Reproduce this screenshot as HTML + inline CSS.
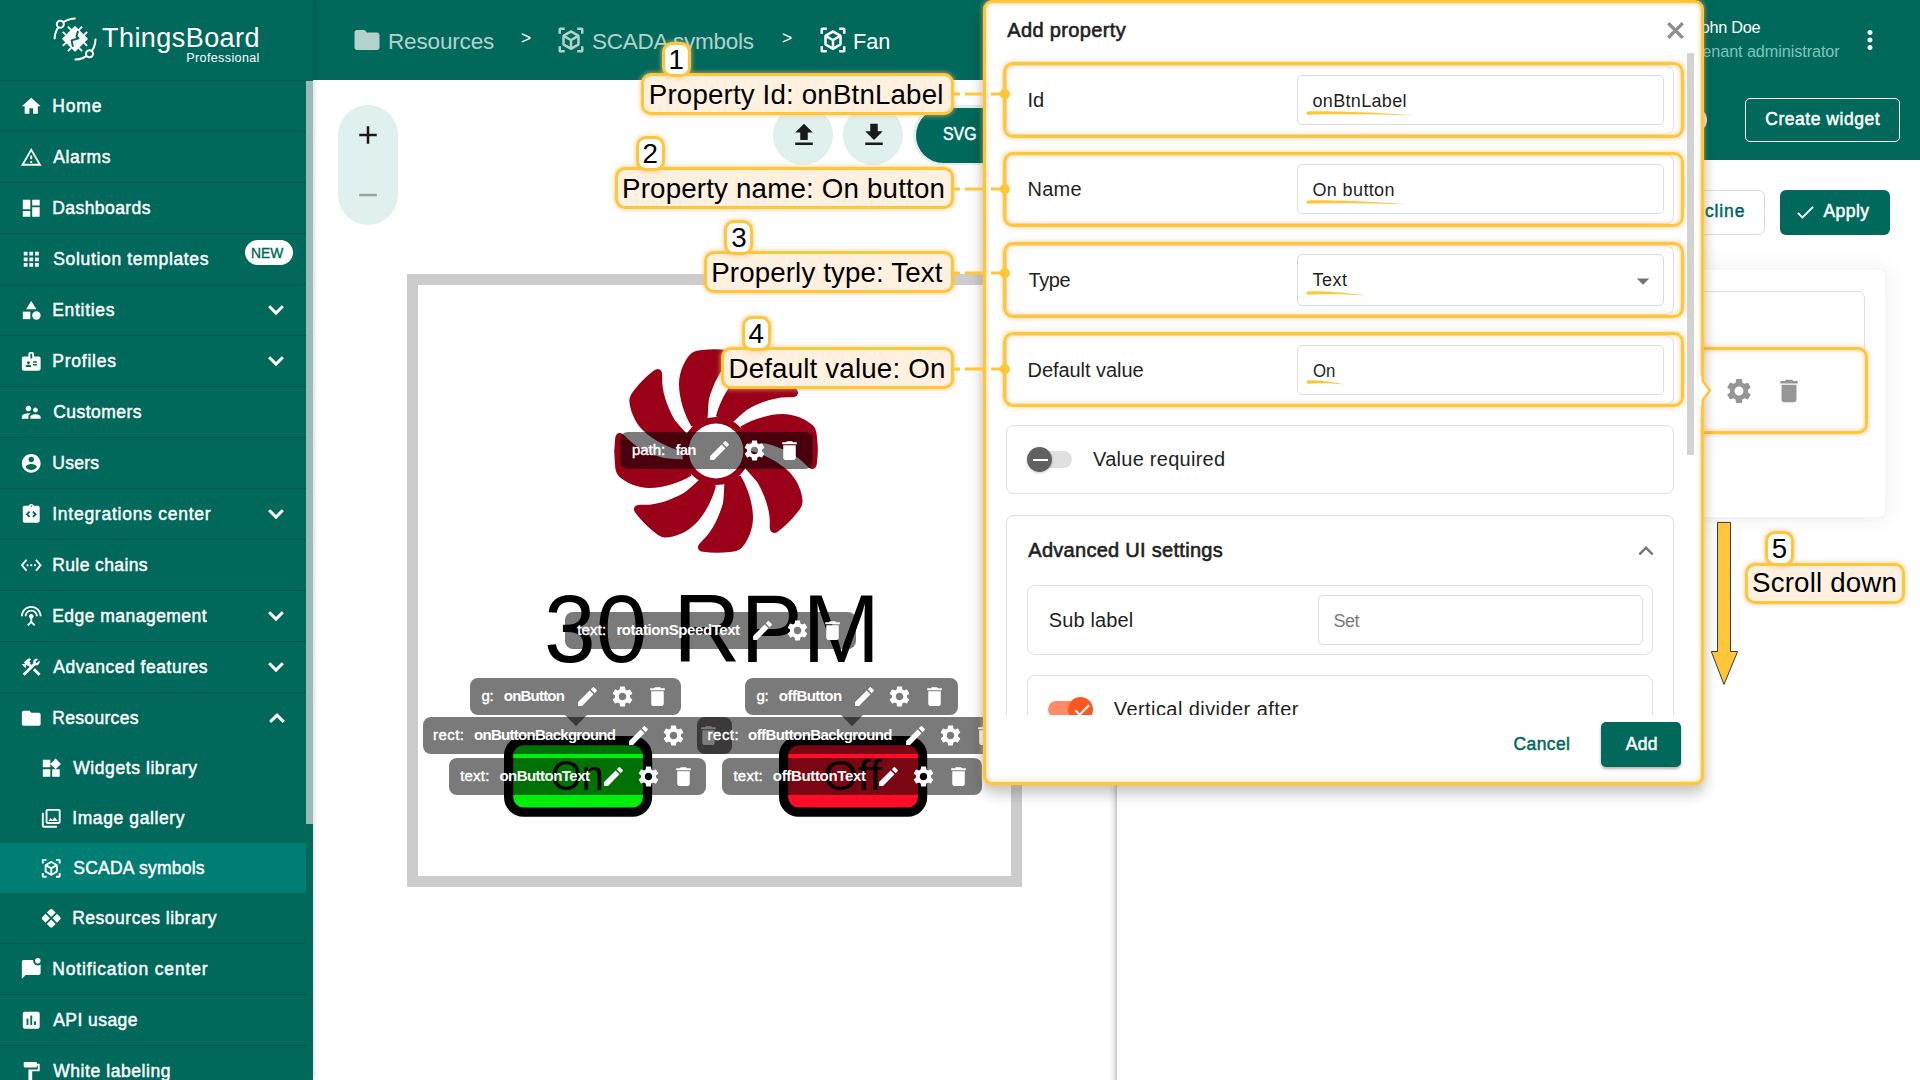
<!DOCTYPE html>
<html lang="en"><head><meta charset="utf-8"><title>ThingsBoard - SCADA symbol editor</title>
<style>
html,body{margin:0;padding:0;}
body{width:1920px;height:1080px;overflow:hidden;background:#fff;font-family:"Liberation Sans",sans-serif;}
#root{position:relative;width:1920px;height:1080px;overflow:hidden;background:#fff;}
.b{position:absolute;box-sizing:border-box;}
.t{position:absolute;white-space:nowrap;display:block;}
.ic{position:absolute;display:block;}
svg{overflow:visible;}

</style></head>
<body>
<div id="root">
<!-- main content -->
<div class="b" style="left:313px;top:80px;width:1607px;height:1000px;background:#fff;"></div>
<div class="b" style="left:1109px;top:80px;width:8px;height:1000px;background:linear-gradient(90deg,rgba(0,0,0,0) 0%,rgba(0,0,0,.05) 45%,rgba(0,0,0,.12) 75%,rgba(0,0,0,.24) 100%);"></div>
<!-- header -->
<div class="b" style="left:313px;top:0px;width:1607px;height:80px;background:#00695c;"></div>
<div class="b" style="left:1117px;top:80px;width:803px;height:80px;background:#00695c;"></div>
<svg class="ic" style="left:352.00px;top:25.00px;" width="30" height="30" viewBox="0 0 24 24" fill="#b3d2ce"><path d="M10 4H4c-1.1 0-1.99.9-1.99 2L2 18c0 1.1.9 2 2 2h16c1.1 0 2-.9 2-2V8c0-1.1-.9-2-2-2h-8l-2-2z"/></svg>
<span id="t0" class="t" style="left:388.00px;top:30.95px;font-size:22.5px;line-height:22.5px;color:#b3d2ce;letter-spacing:-0.162px;">Resources</span>
<span id="t1" class="t" style="left:521.00px;top:29.79px;font-size:17.5px;line-height:17.5px;color:#fff;">&gt;</span>
<svg class="ic" style="left:556.00px;top:25.00px;" width="30" height="30" viewBox="0 0 24 24" fill="#b3d2ce"><path d="M18.25 7.6l-5.5-3.18c-.46-.27-1.04-.27-1.5 0L5.75 7.6c-.46.27-.75.76-.75 1.3v6.350c0 .54.29 1.03.75 1.3l5.5 3.18c.46.27 1.04.27 1.5 0l5.5-3.18c.46-.27.75-.76.75-1.3V8.9c0-.54-.29-1.03-.75-1.3zM7 14.96v-4.62l4 2.32v4.61l-4-2.310zm5-4.03L8 8.61l4-2.31 4 2.31-4 2.320zm1 6.340v-4.61l4-2.32v4.62l-4 2.310zM7 2H3.5C2.67 2 2 2.670 2 3.5V7h2V4h3V2zm10 0h3.5c.83 0 1.5.67 1.5 1.5V7h-2V4h-3V2zM7 22H3.5c-.83 0-1.5-.67-1.5-1.5V17h2v3h3v2zm10 0h3.5c.83 0 1.5-.67 1.5-1.500V17h-2v3h-3v2z"/></svg>
<span id="t2" class="t" style="left:592.00px;top:30.95px;font-size:22.5px;line-height:22.5px;color:#b3d2ce;letter-spacing:-0.253px;">SCADA symbols</span>
<span id="t3" class="t" style="left:782.00px;top:29.79px;font-size:17.5px;line-height:17.5px;color:#fff;">&gt;</span>
<svg class="ic" style="left:818.00px;top:25.00px;" width="30" height="30" viewBox="0 0 24 24" fill="#fff"><path d="M18.25 7.6l-5.5-3.18c-.46-.27-1.04-.27-1.5 0L5.75 7.6c-.46.27-.75.76-.75 1.3v6.350c0 .54.29 1.03.75 1.3l5.5 3.18c.46.27 1.04.27 1.5 0l5.5-3.18c.46-.27.75-.76.75-1.3V8.9c0-.54-.29-1.03-.75-1.3zM7 14.96v-4.62l4 2.32v4.61l-4-2.310zm5-4.03L8 8.61l4-2.31 4 2.31-4 2.320zm1 6.340v-4.61l4-2.32v4.62l-4 2.310zM7 2H3.5C2.67 2 2 2.670 2 3.5V7h2V4h3V2zm10 0h3.5c.83 0 1.5.67 1.5 1.5V7h-2V4h-3V2zM7 22H3.5c-.83 0-1.5-.67-1.5-1.5V17h2v3h3v2zm10 0h3.5c.83 0 1.5-.67 1.5-1.500V17h-2v3h-3v2z"/></svg>
<span id="t4" class="t" style="left:853.03px;top:30.95px;font-size:22.5px;line-height:22.5px;color:#fff;transform-origin:0 0;transform:scaleX(0.9663);">Fan</span>
<span id="t5" class="t" style="left:1693.00px;top:19.24px;font-size:16.25px;line-height:16.25px;color:#fff;letter-spacing:-0.289px;">John Doe</span>
<span id="t6" class="t" style="left:1694.30px;top:43.24px;font-size:16.25px;line-height:16.25px;color:#7fc4bb;letter-spacing:-0.096px;">Tenant administrator</span>
<svg class="ic" style="left:1855.00px;top:25.00px;" width="30" height="30" viewBox="0 0 24 24" fill="#fff"><path d="M12 8c1.1 0 2-.9 2-2s-.9-2-2-2-2 .9-2 2 .9 2 2 2zm0 2c-1.1 0-2 .9-2 2s.9 2 2 2 2-.9 2-2-.9-2-2-2zm0 6c-1.1 0-2 .9-2 2s.9 2 2 2 2-.9 2-2-.9-2-2-2z"/></svg>
<div class="b" style="left:1745px;top:98px;width:155px;height:44px;border:1px solid #fff;border-radius:5px;"></div>
<span id="t7" class="t" style="left:1765.25px;top:111.19px;font-size:17.5px;line-height:17.5px;color:#fff;letter-spacing:0.532px;-webkit-text-stroke:0.5px #fff;">Create widget</span>
<!-- sidebar -->
<div class="b" style="left:0px;top:0px;width:313px;height:1080px;background:#00695c;box-shadow:1px 0 5px rgba(0,0,0,.16);"></div>
<div class="b" style="left:306px;top:81px;width:7px;height:743px;background:#99bab6;"></div>
<svg class="ic" style="left:45px;top:10px" width="70" height="60" viewBox="45 10 70 60">
<g fill="none" stroke="#fff" stroke-width="2" stroke-linecap="round">
<path d="M54.6 38.4 A20.6 20.6 0 0 1 74.8 18.5"/><path d="M95.5 39.4 A20.6 20.6 0 0 1 75.4 59.6"/>
<circle cx="60.3" cy="24.3" r="3.5" fill="#00695c"/><circle cx="89.5" cy="53.7" r="3.5" fill="#00695c"/>
<g transform="translate(75 38.9) rotate(45)" stroke-width="1.8" stroke-linecap="butt"><path d="M-3.6 -9 V-13.6 M-3.6 9 V13.6 M-9 -3.6 H-13.6 M9 -3.6 H13.6"/><path d="M3.6 -9 V-13.6 M3.6 9 V13.6 M-9 3.6 H-13.6 M9 3.6 H13.6"/><rect x="-9.3" y="-9.3" width="18.6" height="18.6" rx="1" fill="#fff" stroke="none"/></g>
<path d="M77.8 31.8 L76.4 36.6 L78.6 38.2 L71.6 40.4 L72.8 46" stroke="#00695c" stroke-width="2" stroke-linejoin="round"/>
</g></svg>
<span id="t8" class="t" style="left:102.00px;top:25.14px;font-size:27px;line-height:27px;color:#fff;letter-spacing:0.443px;">ThingsBoard</span>
<span id="t9" class="t" style="left:186.30px;top:52.42px;font-size:12.5px;line-height:12.5px;color:#fff;letter-spacing:0.390px;">Professional</span>
<div class="b" style="left:0px;top:80px;width:306px;height:1px;background:rgba(0,0,0,.14);"></div>
<svg class="ic" style="left:20.25px;top:94.75px;" width="22.5" height="22.5" viewBox="0 0 24 24" fill="#fff"><path d="M10 20v-6h4v6h5v-8h3L12 3 2 12h3v8z"/></svg>
<span id="t10" class="t" style="left:52.23px;top:98.19px;font-size:17.5px;line-height:17.5px;color:#fff;letter-spacing:0.867px;-webkit-text-stroke:0.45px #fff;">Home</span>
<div class="b" style="left:0px;top:131px;width:306px;height:1px;background:rgba(0,0,0,.14);"></div>
<svg class="ic" style="left:20.25px;top:145.75px;" width="22.5" height="22.5" viewBox="0 0 24 24" fill="#fff"><path d="M12 5.99L19.53 19H4.47L12 5.99M12 2L1 21h22L12 2zm1 14h-2v2h2v-2zm0-6h-2v4h2v-4z"/></svg>
<span id="t11" class="t" style="left:53.23px;top:149.19px;font-size:17.5px;line-height:17.5px;color:#fff;letter-spacing:0.570px;-webkit-text-stroke:0.45px #fff;">Alarms</span>
<div class="b" style="left:0px;top:182px;width:306px;height:1px;background:rgba(0,0,0,.14);"></div>
<svg class="ic" style="left:20.25px;top:196.75px;" width="22.5" height="22.5" viewBox="0 0 24 24" fill="#fff"><path d="M3 13h8V3H3v10zm0 8h8v-6H3v6zm10 0h8V11h-8v10zm0-18v6h8V3h-8z"/></svg>
<span id="t12" class="t" style="left:52.23px;top:200.19px;font-size:17.5px;line-height:17.5px;color:#fff;letter-spacing:0.438px;-webkit-text-stroke:0.45px #fff;">Dashboards</span>
<div class="b" style="left:0px;top:233px;width:306px;height:1px;background:rgba(0,0,0,.14);"></div>
<svg class="ic" style="left:20.25px;top:247.75px;" width="22.5" height="22.5" viewBox="0 0 24 24" fill="#fff"><path d="M4 8h4V4H4v4zm6 12h4v-4h-4v4zm-6 0h4v-4H4v4zm0-6h4v-4H4v4zm6 0h4v-4h-4v4zm6-10v4h4V4h-4zm-6 4h4V4h-4v4zm6 6h4v-4h-4v4zm0 6h4v-4h-4v4z"/></svg>
<span id="t13" class="t" style="left:53.23px;top:251.19px;font-size:17.5px;line-height:17.5px;color:#fff;letter-spacing:0.666px;-webkit-text-stroke:0.45px #fff;">Solution templates</span>
<div class="b" style="left:245px;top:239.5px;width:48.3px;height:25px;background:#fff;border-radius:13px;"></div>
<span id="t14" class="t" style="left:251.46px;top:245.10px;font-size:15px;line-height:15px;color:#00695c;-webkit-text-stroke:0.4px #00695c;transform-origin:0 0;transform:scaleX(0.9223);">NEW</span>
<div class="b" style="left:0px;top:284px;width:306px;height:1px;background:rgba(0,0,0,.14);"></div>
<svg class="ic" style="left:20.25px;top:298.75px;" width="22.5" height="22.5" viewBox="0 0 24 24" fill="#fff"><path d="M12 2l-5.5 9h11z"/><circle cx="17.5" cy="17.5" r="4.5"/><path d="M3 13.5h8v8H3z"/></svg>
<span id="t15" class="t" style="left:52.23px;top:302.19px;font-size:17.5px;line-height:17.5px;color:#fff;letter-spacing:0.702px;-webkit-text-stroke:0.45px #fff;">Entities</span>
<svg class="ic" style="left:266px;top:302px" width="20" height="16" viewBox="-10 -8 20 16"><path d="M-6.8 -3.7 L0 3.1 L6.8 -3.7" fill="none" stroke="#fff" stroke-width="3"/></svg>
<div class="b" style="left:0px;top:335px;width:306px;height:1px;background:rgba(0,0,0,.14);"></div>
<svg class="ic" style="left:20.25px;top:349.75px;" width="22.5" height="22.5" viewBox="0 0 24 24" fill="#fff"><path d="M20 7h-5V4c0-1.1-.9-2-2-2h-2c-1.1 0-2 .9-2 2v3H4c-1.1 0-2 .9-2 2v11c0 1.1.9 2 2 2h16c1.1 0 2-.9 2-2V9c0-1.1-.9-2-2-2zM9 12c.83 0 1.5.67 1.5 1.5S9.83 15 9 15s-1.5-.67-1.5-1.5S8.17 12 9 12zm3 6H6v-.75c0-1 2-1.5 3-1.5s3 .5 3 1.5V18zm1-9h-2V4h2v5zm5 7.5h-4V15h4v1.5zm0-3h-4V12h4v1.5z"/></svg>
<span id="t16" class="t" style="left:52.23px;top:353.19px;font-size:17.5px;line-height:17.5px;color:#fff;letter-spacing:0.778px;-webkit-text-stroke:0.45px #fff;">Profiles</span>
<svg class="ic" style="left:266px;top:353px" width="20" height="16" viewBox="-10 -8 20 16"><path d="M-6.8 -3.7 L0 3.1 L6.8 -3.7" fill="none" stroke="#fff" stroke-width="3"/></svg>
<div class="b" style="left:0px;top:386px;width:306px;height:1px;background:rgba(0,0,0,.14);"></div>
<svg class="ic" style="left:20.25px;top:400.75px;" width="22.5" height="22.5" viewBox="0 0 24 24" fill="#fff"><path d="M16.5 12c1.38 0 2.49-1.12 2.49-2.5S17.88 7 16.5 7C15.12 7 14 8.12 14 9.5s1.12 2.5 2.5 2.5zM9 11c1.66 0 2.99-1.34 2.99-3S10.66 5 9 5C7.34 5 6 6.34 6 8s1.34 3 3 3zm7.5 3c-1.83 0-5.5.92-5.5 2.75V19h11v-2.25c0-1.83-3.67-2.75-5.5-2.75zM9 13c-2.33 0-7 1.17-7 3.5V19h7v-2.25c0-.85.33-2.34 2.37-3.47C10.5 13.1 9.66 13 9 13z"/></svg>
<span id="t17" class="t" style="left:53.23px;top:404.19px;font-size:17.5px;line-height:17.5px;color:#fff;letter-spacing:0.462px;-webkit-text-stroke:0.45px #fff;">Customers</span>
<div class="b" style="left:0px;top:437px;width:306px;height:1px;background:rgba(0,0,0,.14);"></div>
<svg class="ic" style="left:20.25px;top:451.75px;" width="22.5" height="22.5" viewBox="0 0 24 24" fill="#fff"><path d="M12 2C6.48 2 2 6.48 2 12s4.48 10 10 10 10-4.48 10-10S17.52 2 12 2zm0 3c1.66 0 3 1.34 3 3s-1.34 3-3 3-3-1.34-3-3 1.34-3 3-3zm0 14.2c-2.5 0-4.71-1.28-6-3.22.03-1.99 4-3.08 6-3.08 1.99 0 5.97 1.09 6 3.08-1.29 1.94-3.5 3.22-6 3.22z"/></svg>
<span id="t18" class="t" style="left:52.23px;top:455.19px;font-size:17.5px;line-height:17.5px;color:#fff;letter-spacing:0.275px;-webkit-text-stroke:0.45px #fff;">Users</span>
<div class="b" style="left:0px;top:488px;width:306px;height:1px;background:rgba(0,0,0,.14);"></div>
<svg class="ic" style="left:20.25px;top:502.75px;" width="22.5" height="22.5" viewBox="0 0 24 24" fill="#fff"><path d="M19 3h-4.18C14.4 1.84 13.3 1 12 1s-2.4.84-2.82 2H5c-.14 0-.27.01-.4.04-.39.08-.74.28-1.01.55-.18.18-.33.4-.43.64-.1.23-.16.49-.16.77v14c0 .27.06.54.16.78s.25.45.43.64c.27.27.62.47 1.01.55.13.02.26.03.4.03h14c1.1 0 2-.9 2-2V5c0-1.1-.9-2-2-2zm-8 11.17l-1.41 1.42L6 12l3.59-3.59L11 9.83 8.83 12 11 14.17zm1-9.92c-.41 0-.75-.34-.75-.75s.34-.75.75-.75.75.34.75.75-.34.75-.75.75zm2.41 11.34L13 14.17 15.17 12 13 9.83l1.41-1.42L18 12l-3.59 3.59z"/></svg>
<span id="t19" class="t" style="left:52.23px;top:506.19px;font-size:17.5px;line-height:17.5px;color:#fff;letter-spacing:0.746px;-webkit-text-stroke:0.45px #fff;">Integrations center</span>
<svg class="ic" style="left:266px;top:506px" width="20" height="16" viewBox="-10 -8 20 16"><path d="M-6.8 -3.7 L0 3.1 L6.8 -3.7" fill="none" stroke="#fff" stroke-width="3"/></svg>
<div class="b" style="left:0px;top:539px;width:306px;height:1px;background:rgba(0,0,0,.14);"></div>
<svg class="ic" style="left:20.25px;top:553.75px;" width="22.5" height="22.5" viewBox="0 0 24 24" fill="#fff"><path d="M7.77 6.76L6.23 5.48.82 12l5.41 6.52 1.54-1.28L3.42 12l4.35-5.24zM7 13h2v-2H7v2zm10-2h-2v2h2v-2zm-6 2h2v-2h-2v2zm6.77-7.52l-1.54 1.28L20.58 12l-4.35 5.24 1.54 1.28L23.18 12l-5.41-6.52z"/></svg>
<span id="t20" class="t" style="left:52.23px;top:557.19px;font-size:17.5px;line-height:17.5px;color:#fff;letter-spacing:0.386px;-webkit-text-stroke:0.45px #fff;">Rule chains</span>
<div class="b" style="left:0px;top:590px;width:306px;height:1px;background:rgba(0,0,0,.14);"></div>
<svg class="ic" style="left:20.25px;top:604.75px;" width="22.5" height="22.5" viewBox="0 0 24 24" fill="#fff"><path d="M12 5c-3.87 0-7 3.13-7 7h2c0-2.76 2.24-5 5-5s5 2.24 5 5h2c0-3.87-3.13-7-7-7zm1 9.29c.88-.39 1.5-1.26 1.5-2.29 0-1.38-1.12-2.5-2.5-2.5S9.5 10.62 9.5 12c0 1.02.62 1.9 1.5 2.29v3.3L7.59 21 9 22.41l3-3 3 3L16.41 21 13 17.59v-3.3zM12 1C5.93 1 1 5.93 1 12h2c0-4.97 4.03-9 9-9s9 4.03 9 9h2c0-6.07-4.93-11-11-11z"/></svg>
<span id="t21" class="t" style="left:52.23px;top:608.19px;font-size:17.5px;line-height:17.5px;color:#fff;letter-spacing:0.467px;-webkit-text-stroke:0.45px #fff;">Edge management</span>
<svg class="ic" style="left:266px;top:608px" width="20" height="16" viewBox="-10 -8 20 16"><path d="M-6.8 -3.7 L0 3.1 L6.8 -3.7" fill="none" stroke="#fff" stroke-width="3"/></svg>
<div class="b" style="left:0px;top:641px;width:306px;height:1px;background:rgba(0,0,0,.14);"></div>
<svg class="ic" style="left:20.25px;top:655.75px;" width="22.5" height="22.5" viewBox="0 0 24 24" fill="#fff"><path d="M13.783 15.172l2.121-2.121 5.996 5.996-2.121 2.121z"/><path d="M17.5 10c1.93 0 3.5-1.57 3.5-3.5 0-.58-.16-1.12-.41-1.6l-2.7 2.7-1.49-1.49 2.7-2.7c-.48-.25-1.02-.41-1.6-.41C15.57 3 14 4.57 14 6.5c0 .41.08.8.21 1.16l-1.85 1.85-1.78-1.78.71-.71-1.41-1.41L12 3.49c-1.17-1.17-3.07-1.17-4.24 0L4.22 7.03l1.41 1.41H2.81l-.71.71 3.54 3.54.71-.71V9.15l1.41 1.41.71-.71 1.78 1.78-7.41 7.41 2.12 2.12L16.34 9.79c.36.13.75.21 1.16.21z"/></svg>
<span id="t22" class="t" style="left:53.23px;top:659.19px;font-size:17.5px;line-height:17.5px;color:#fff;letter-spacing:0.523px;-webkit-text-stroke:0.45px #fff;">Advanced features</span>
<svg class="ic" style="left:266px;top:659px" width="20" height="16" viewBox="-10 -8 20 16"><path d="M-6.8 -3.7 L0 3.1 L6.8 -3.7" fill="none" stroke="#fff" stroke-width="3"/></svg>
<div class="b" style="left:0px;top:692px;width:306px;height:1px;background:rgba(0,0,0,.14);"></div>
<svg class="ic" style="left:20.25px;top:706.75px;" width="22.5" height="22.5" viewBox="0 0 24 24" fill="#fff"><path d="M10 4H4c-1.1 0-1.99.9-1.99 2L2 18c0 1.1.9 2 2 2h16c1.1 0 2-.9 2-2V8c0-1.1-.9-2-2-2h-8l-2-2z"/></svg>
<span id="t23" class="t" style="left:52.23px;top:710.19px;font-size:17.5px;line-height:17.5px;color:#fff;letter-spacing:0.332px;-webkit-text-stroke:0.45px #fff;">Resources</span>
<svg class="ic" style="left:267px;top:710px" width="20" height="16" viewBox="-10 -8 20 16"><path d="M-6.8 3.9 L0 -2.9 L6.8 3.9" fill="none" stroke="#fff" stroke-width="3"/></svg>
<svg class="ic" style="left:40.25px;top:756.75px;" width="22.5" height="22.5" viewBox="0 0 24 24" fill="#fff"><path d="M13 13v8h8v-8h-8zM3 21h8v-8H3v8zM3 3v8h8V3H3zm13.66-1.31L11 7.34 16.66 13l5.66-5.66-5.66-5.65z"/></svg>
<span id="t24" class="t" style="left:73.22px;top:760.19px;font-size:17.5px;line-height:17.5px;color:#fff;letter-spacing:0.577px;-webkit-text-stroke:0.45px #fff;">Widgets library</span>
<svg class="ic" style="left:40.25px;top:806.75px;" width="22.5" height="22.5" viewBox="0 0 24 24" fill="#fff"><path d="M20 4v12H8V4h12m0-2H8c-1.1 0-2 .9-2 2v12c0 1.1.9 2 2 2h12c1.1 0 2-.9 2-2V4c0-1.1-.9-2-2-2zm-8.5 9.67l1.69 2.26 2.48-3.1L19 15H9zM2 6v14c0 1.1.9 2 2 2h14v-2H4V6H2z"/></svg>
<span id="t25" class="t" style="left:72.22px;top:810.19px;font-size:17.5px;line-height:17.5px;color:#fff;letter-spacing:0.604px;-webkit-text-stroke:0.45px #fff;">Image gallery</span>
<div class="b" style="left:0px;top:843px;width:306px;height:50px;background:#007e73;"></div>
<svg class="ic" style="left:40.25px;top:856.75px;" width="22.5" height="22.5" viewBox="0 0 24 24" fill="#fff"><path d="M18.25 7.6l-5.5-3.18c-.46-.27-1.04-.27-1.5 0L5.75 7.6c-.46.27-.75.76-.75 1.3v6.350c0 .54.29 1.03.75 1.3l5.5 3.18c.46.27 1.04.27 1.5 0l5.5-3.18c.46-.27.75-.76.75-1.3V8.9c0-.54-.29-1.03-.75-1.3zM7 14.96v-4.62l4 2.32v4.61l-4-2.310zm5-4.03L8 8.61l4-2.31 4 2.31-4 2.320zm1 6.340v-4.61l4-2.32v4.62l-4 2.310zM7 2H3.5C2.67 2 2 2.670 2 3.5V7h2V4h3V2zm10 0h3.5c.83 0 1.5.67 1.5 1.5V7h-2V4h-3V2zM7 22H3.5c-.83 0-1.5-.67-1.5-1.5V17h2v3h3v2zm10 0h3.5c.83 0 1.5-.67 1.5-1.500V17h-2v3h-3v2z"/></svg>
<span id="t26" class="t" style="left:73.22px;top:860.19px;font-size:17.5px;line-height:17.5px;color:#fff;letter-spacing:0.247px;-webkit-text-stroke:0.45px #fff;">SCADA symbols</span>
<svg class="ic" style="left:40.25px;top:906.75px;" width="22.5" height="22.5" viewBox="0 0 24 24" fill="#fff"><path d="M12 2C11.5 2 11 2.19 10.59 2.59L7.29 5.88L12 10.58L16.71 5.88L13.41 2.59C13 2.19 12.5 2 12 2M5.88 7.29L2.59 10.59C1.8 11.37 1.8 12.63 2.59 13.41L5.88 16.71L10.58 12L5.88 7.29M18.12 7.29L13.42 12L18.12 16.71L21.41 13.41C22.2 12.63 22.2 11.37 21.41 10.59L18.12 7.29M12 13.42L7.29 18.12L10.59 21.41C11.37 22.2 12.63 22.2 13.41 21.41L16.71 18.12L12 13.42Z"/></svg>
<span id="t27" class="t" style="left:72.22px;top:910.19px;font-size:17.5px;line-height:17.5px;color:#fff;letter-spacing:0.509px;-webkit-text-stroke:0.45px #fff;">Resources library</span>
<div class="b" style="left:0px;top:943px;width:306px;height:1px;background:rgba(0,0,0,.14);"></div>
<svg class="ic" style="left:20.25px;top:957.75px;" width="22.5" height="22.5" viewBox="0 0 24 24" fill="#fff"><path d="M22 6.98V16c0 1.1-.9 2-2 2H6l-4 4V4c0-1.1.9-2 2-2h10.1c-.06.32-.1.66-.1 1 0 2.76 2.24 5 5 5 1.13 0 2.16-.39 3-1.020zM16 3c0 1.66 1.34 3 3 3s3-1.34 3-3-1.340-3-3-3-3 1.34-3 3z"/></svg>
<span id="t28" class="t" style="left:52.23px;top:961.19px;font-size:17.5px;line-height:17.5px;color:#fff;letter-spacing:0.851px;-webkit-text-stroke:0.45px #fff;">Notification center</span>
<div class="b" style="left:0px;top:994px;width:306px;height:1px;background:rgba(0,0,0,.14);"></div>
<svg class="ic" style="left:20.25px;top:1008.75px;" width="22.5" height="22.5" viewBox="0 0 24 24" fill="#fff"><path d="M19 3H5c-1.1 0-2 .9-2 2v14c0 1.1.9 2 2 2h14c1.1 0 2-.9 2-2V5c0-1.1-.9-2-2-2zM9 17H7v-7h2v7zm4 0h-2V7h2v10zm4 0h-2v-4h2v4z"/></svg>
<span id="t29" class="t" style="left:53.23px;top:1012.19px;font-size:17.5px;line-height:17.5px;color:#fff;letter-spacing:0.442px;-webkit-text-stroke:0.45px #fff;">API usage</span>
<div class="b" style="left:0px;top:1045px;width:306px;height:1px;background:rgba(0,0,0,.14);"></div>
<svg class="ic" style="left:20.25px;top:1059.75px;" width="22.5" height="22.5" viewBox="0 0 24 24" fill="#fff"><path d="M18 4V3c0-.55-.45-1-1-1H5c-.55 0-1 .45-1 1v4c0 .55.45 1 1 1h12c.55 0 1-.45 1-1V6h1v4H9v11c0 .55.45 1 1 1h2c.55 0 1-.45 1-1v-9h8V4h-3z"/></svg>
<span id="t30" class="t" style="left:53.23px;top:1063.19px;font-size:17.5px;line-height:17.5px;color:#fff;letter-spacing:0.566px;-webkit-text-stroke:0.45px #fff;">White labeling</span>
<div class="b" style="left:0px;top:1096px;width:306px;height:1px;background:rgba(0,0,0,.14);"></div>
<!-- editor -->
<div class="b" style="left:338px;top:105px;width:60px;height:120px;background:#e0f0ee;border-radius:30px;"></div>
<svg class="ic" style="left:353.00px;top:120.00px;" width="30" height="30" viewBox="0 0 24 24" fill="#1a1a1a"><path d="M19 13h-6v6h-2v-6H5v-2h6V5h2v6h6v2z"/></svg>
<svg class="ic" style="left:353.00px;top:180.00px;" width="30" height="30" viewBox="0 0 24 24" fill="#9e9e9e"><path d="M19 13H5v-2h14v2z"/></svg>
<div class="b" style="left:773px;top:105px;width:60px;height:60px;background:#e0f0ee;border-radius:30px;"></div>
<div class="b" style="left:843px;top:105px;width:60px;height:60px;background:#e0f0ee;border-radius:30px;"></div>
<svg class="ic" style="left:788.50px;top:120.00px;" width="30" height="30" viewBox="0 0 24 24" fill="#1a1a1a"><path d="M9 16h6v-6h4l-7-7-7 7h4zm-4 2h14v2H5z"/></svg>
<svg class="ic" style="left:858.50px;top:120.00px;" width="30" height="30" viewBox="0 0 24 24" fill="#1a1a1a"><path d="M19 9h-4V3H9v6H5l7 7 7-7zM5 18v2h14v-2H5z"/></svg>
<div class="b" style="left:913px;top:105px;width:140px;height:60px;background:#e0f0ee;border-radius:30px;"></div>
<div class="b" style="left:916px;top:108px;width:120px;height:55px;background:#00695c;border-radius:27.5px;"></div>
<span id="t31" class="t" style="left:942.60px;top:126.19px;font-size:17.5px;line-height:17.5px;color:#fff;-webkit-text-stroke:0.45px #fff;transform-origin:0 0;transform:scaleX(0.9050);">SVG</span>
<div class="b" style="left:407px;top:273.7px;width:614.7px;height:613.8px;border:11.7px solid #ccc;background:#fff;"></div>
<!-- svg canvas content -->
<svg class="ic" style="left:596px;top:331px" width="240" height="240" viewBox="-120 -120 240 240"><g fill="#9b0019"><path transform="rotate(0)" d="M24.5,-24.5 C35,-31 52,-37 66.7,-37 C78,-37 90,-32 97,-25.5 Q100.5,-22 101,-14 A101.5 101.5 0 0 1 100.8,13 Q100,18.5 95.5,18 Q93,17.5 90,14 C82,5 68,-2.5 52,-7 C45,-8 38,-8 30,-8.5 Z"/><path transform="rotate(45)" d="M24.5,-24.5 C35,-31 52,-37 66.7,-37 C78,-37 90,-32 97,-25.5 Q100.5,-22 101,-14 A101.5 101.5 0 0 1 100.8,13 Q100,18.5 95.5,18 Q93,17.5 90,14 C82,5 68,-2.5 52,-7 C45,-8 38,-8 30,-8.5 Z"/><path transform="rotate(90)" d="M24.5,-24.5 C35,-31 52,-37 66.7,-37 C78,-37 90,-32 97,-25.5 Q100.5,-22 101,-14 A101.5 101.5 0 0 1 100.8,13 Q100,18.5 95.5,18 Q93,17.5 90,14 C82,5 68,-2.5 52,-7 C45,-8 38,-8 30,-8.5 Z"/><path transform="rotate(135)" d="M24.5,-24.5 C35,-31 52,-37 66.7,-37 C78,-37 90,-32 97,-25.5 Q100.5,-22 101,-14 A101.5 101.5 0 0 1 100.8,13 Q100,18.5 95.5,18 Q93,17.5 90,14 C82,5 68,-2.5 52,-7 C45,-8 38,-8 30,-8.5 Z"/><path transform="rotate(180)" d="M24.5,-24.5 C35,-31 52,-37 66.7,-37 C78,-37 90,-32 97,-25.5 Q100.5,-22 101,-14 A101.5 101.5 0 0 1 100.8,13 Q100,18.5 95.5,18 Q93,17.5 90,14 C82,5 68,-2.5 52,-7 C45,-8 38,-8 30,-8.5 Z"/><path transform="rotate(225)" d="M24.5,-24.5 C35,-31 52,-37 66.7,-37 C78,-37 90,-32 97,-25.5 Q100.5,-22 101,-14 A101.5 101.5 0 0 1 100.8,13 Q100,18.5 95.5,18 Q93,17.5 90,14 C82,5 68,-2.5 52,-7 C45,-8 38,-8 30,-8.5 Z"/><path transform="rotate(270)" d="M24.5,-24.5 C35,-31 52,-37 66.7,-37 C78,-37 90,-32 97,-25.5 Q100.5,-22 101,-14 A101.5 101.5 0 0 1 100.8,13 Q100,18.5 95.5,18 Q93,17.5 90,14 C82,5 68,-2.5 52,-7 C45,-8 38,-8 30,-8.5 Z"/><path transform="rotate(315)" d="M24.5,-24.5 C35,-31 52,-37 66.7,-37 C78,-37 90,-32 97,-25.5 Q100.5,-22 101,-14 A101.5 101.5 0 0 1 100.8,13 Q100,18.5 95.5,18 Q93,17.5 90,14 C82,5 68,-2.5 52,-7 C45,-8 38,-8 30,-8.5 Z"/><circle r="34"/></g><circle r="27.4" fill="#fff"/></svg>
<span id="t32" class="t" style="left:544.11px;top:580.71px;font-size:96.5px;line-height:96.5px;color:#000;transform-origin:0 0;transform:scaleX(0.9639);">30 RPM</span>
<svg class="ic" style="left:503.75px;top:736.4px" width="148.15" height="80.70"><rect x="4.6" y="4.6" width="138.95" height="71.50" rx="15" fill="#00ee0c" stroke="#000" stroke-width="9.2"/></svg>
<span id="t33" class="t" style="left:551.44px;top:755.02px;font-size:42.5px;line-height:42.5px;color:#000;transform-origin:0 0;transform:scaleX(0.9297);">On</span>
<svg class="ic" style="left:779px;top:736.4px" width="148.20" height="80.70"><rect x="4.6" y="4.6" width="139.00" height="71.50" rx="15" fill="#ff0d28" stroke="#000" stroke-width="9.2"/></svg>
<span id="t34" class="t" style="left:822.60px;top:755.02px;font-size:42.5px;line-height:42.5px;color:#000;transform-origin:0 0;transform:scaleX(1.0481);">Off</span>
<div class="b" style="left:619.7px;top:431.8px;width:193.0px;height:37.2px;background:rgba(0,0,0,.52);border-radius:8px;"></div>
<span id="t35" class="t" style="left:632.00px;top:441.90px;font-size:15px;line-height:15px;color:#fff;letter-spacing:-0.049px;-webkit-text-stroke:0.4px #fff;">path:</span>
<span id="t36" class="t" style="left:675.50px;top:441.90px;font-size:15px;line-height:15px;color:#fff;font-weight:700;letter-spacing:-0.819px;">fan</span>
<svg class="ic" style="left:707.00px;top:438.00px;" width="25" height="25" viewBox="0 0 24 24" fill="#fff"><path d="M3 17.25V21h3.75L17.81 9.94l-3.75-3.75L3 17.25zM20.71 7.04c.39-.39.39-1.02 0-1.41l-2.34-2.34c-.39-.39-1.02-.39-1.41 0l-1.83 1.83 3.75 3.75 1.83-1.83z"/></svg>
<svg class="ic" style="left:742.00px;top:438.00px;" width="25" height="25" viewBox="0 0 24 24" fill="#fff"><path d="M19.14 12.94c.04-.3.06-.61.06-.94 0-.32-.02-.64-.07-.94l2.03-1.58c.18-.14.23-.41.12-.61l-1.92-3.32c-.12-.22-.37-.29-.59-.22l-2.39.96c-.5-.38-1.03-.7-1.62-.94l-.36-2.54c-.04-.24-.24-.41-.48-.41h-3.84c-.24 0-.43.17-.47.41l-.36 2.54c-.59.24-1.13.57-1.62.94l-2.39-.96c-.22-.08-.47 0-.59.22L2.74 8.87c-.12.21-.08.47.12.61l2.03 1.58c-.05.3-.09.63-.09.94s.02.64.07.94l-2.03 1.58c-.18.14-.23.41-.12.61l1.92 3.32c.12.22.37.29.59.22l2.39-.96c.5.38 1.03.7 1.62.94l.36 2.54c.05.24.24.41.48.41h3.84c.24 0 .44-.17.47-.41l.36-2.54c.59-.24 1.13-.56 1.62-.94l2.39.96c.22.08.47 0 .59-.22l1.92-3.32c.12-.22.07-.47-.12-.61l-2.01-1.58zM12 15.6c-1.98 0-3.6-1.62-3.6-3.6s1.62-3.6 3.6-3.6 3.6 1.62 3.6 3.6-1.62 3.6-3.6 3.6z"/></svg>
<svg class="ic" style="left:777.00px;top:438.00px;" width="25" height="25" viewBox="0 0 24 24" fill="#fff"><path d="M6 19c0 1.1.9 2 2 2h8c1.1 0 2-.9 2-2V7H6v12zM19 4h-3.5l-1-1h-5l-1 1H5v2h14V4z"/></svg>
<div class="b" style="left:564.8px;top:612px;width:291.1px;height:37.2px;background:rgba(0,0,0,.52);border-radius:8px;"></div>
<span id="t37" class="t" style="left:577.20px;top:622.10px;font-size:15px;line-height:15px;color:#fff;letter-spacing:0.156px;-webkit-text-stroke:0.4px #fff;">text:</span>
<span id="t38" class="t" style="left:616.40px;top:622.10px;font-size:15px;line-height:15px;color:#fff;font-weight:700;letter-spacing:-0.430px;">rotationSpeedText</span>
<svg class="ic" style="left:750.20px;top:618.20px;" width="25" height="25" viewBox="0 0 24 24" fill="#fff"><path d="M3 17.25V21h3.75L17.81 9.94l-3.75-3.75L3 17.25zM20.71 7.04c.39-.39.39-1.02 0-1.41l-2.34-2.34c-.39-.39-1.02-.39-1.41 0l-1.83 1.83 3.75 3.75 1.83-1.83z"/></svg>
<svg class="ic" style="left:785.20px;top:618.20px;" width="25" height="25" viewBox="0 0 24 24" fill="#fff"><path d="M19.14 12.94c.04-.3.06-.61.06-.94 0-.32-.02-.64-.07-.94l2.03-1.58c.18-.14.23-.41.12-.61l-1.92-3.32c-.12-.22-.37-.29-.59-.22l-2.39.96c-.5-.38-1.03-.7-1.62-.94l-.36-2.54c-.04-.24-.24-.41-.48-.41h-3.84c-.24 0-.43.17-.47.41l-.36 2.54c-.59.24-1.13.57-1.62.94l-2.39-.96c-.22-.08-.47 0-.59.22L2.74 8.87c-.12.21-.08.47.12.61l2.03 1.58c-.05.3-.09.63-.09.94s.02.64.07.94l-2.03 1.58c-.18.14-.23.41-.12.61l1.92 3.32c.12.22.37.29.59.22l2.39-.96c.5.38 1.03.7 1.62.94l.36 2.54c.05.24.24.41.48.41h3.84c.24 0 .44-.17.47-.41l.36-2.54c.59-.24 1.13-.56 1.62-.94l2.39.96c.22.08.47 0 .59-.22l1.92-3.32c.12-.22.07-.47-.12-.61l-2.01-1.58zM12 15.6c-1.98 0-3.6-1.62-3.6-3.6s1.62-3.6 3.6-3.6 3.6 1.62 3.6 3.6-1.62 3.6-3.6 3.6z"/></svg>
<svg class="ic" style="left:820.20px;top:618.20px;" width="25" height="25" viewBox="0 0 24 24" fill="#fff"><path d="M6 19c0 1.1.9 2 2 2h8c1.1 0 2-.9 2-2V7H6v12zM19 4h-3.5l-1-1h-5l-1 1H5v2h14V4z"/></svg>
<div class="b" style="left:422.8px;top:716.8px;width:309.0px;height:37.2px;background:rgba(0,0,0,.52);border-radius:8px;"></div>
<span id="t39" class="t" style="left:432.95px;top:726.90px;font-size:15px;line-height:15px;color:#fff;letter-spacing:0.474px;-webkit-text-stroke:0.4px #fff;">rect:</span>
<span id="t40" class="t" style="left:474.00px;top:726.90px;font-size:15px;line-height:15px;color:#fff;font-weight:700;letter-spacing:-0.717px;">onButtonBackground</span>
<svg class="ic" style="left:626.10px;top:723.00px;" width="25" height="25" viewBox="0 0 24 24" fill="#fff"><path d="M3 17.25V21h3.75L17.81 9.94l-3.75-3.75L3 17.25zM20.71 7.04c.39-.39.39-1.02 0-1.41l-2.34-2.34c-.39-.39-1.02-.39-1.41 0l-1.83 1.83 3.75 3.75 1.83-1.83z"/></svg>
<svg class="ic" style="left:661.10px;top:723.00px;" width="25" height="25" viewBox="0 0 24 24" fill="#fff"><path d="M19.14 12.94c.04-.3.06-.61.06-.94 0-.32-.02-.64-.07-.94l2.03-1.58c.18-.14.23-.41.12-.61l-1.92-3.32c-.12-.22-.37-.29-.59-.22l-2.39.96c-.5-.38-1.03-.7-1.62-.94l-.36-2.54c-.04-.24-.24-.41-.48-.41h-3.84c-.24 0-.43.17-.47.41l-.36 2.54c-.59.24-1.13.57-1.62.94l-2.39-.96c-.22-.08-.47 0-.59.22L2.74 8.87c-.12.21-.08.47.12.61l2.03 1.58c-.05.3-.09.63-.09.94s.02.64.07.94l-2.03 1.58c-.18.14-.23.41-.12.61l1.92 3.32c.12.22.37.29.59.22l2.39-.96c.5.38 1.03.7 1.62.94l.36 2.54c.05.24.24.41.48.41h3.84c.24 0 .44-.17.47-.41l.36-2.54c.59-.24 1.13-.56 1.62-.94l2.39.96c.22.08.47 0 .59-.22l1.92-3.32c.12-.22.07-.47-.12-.61l-2.01-1.58zM12 15.6c-1.98 0-3.6-1.62-3.6-3.6s1.62-3.6 3.6-3.6 3.6 1.62 3.6 3.6-1.62 3.6-3.6 3.6z"/></svg>
<svg class="ic" style="left:696.10px;top:723.00px;" width="25" height="25" viewBox="0 0 24 24" fill="#fff"><path d="M6 19c0 1.1.9 2 2 2h8c1.1 0 2-.9 2-2V7H6v12zM19 4h-3.5l-1-1h-5l-1 1H5v2h14V4z"/></svg>
<div class="b" style="left:697px;top:716.8px;width:311.5px;height:37.2px;background:rgba(0,0,0,.52);border-radius:8px;"></div>
<span id="t41" class="t" style="left:707.60px;top:726.90px;font-size:15px;line-height:15px;color:#fff;letter-spacing:0.474px;-webkit-text-stroke:0.4px #fff;">rect:</span>
<span id="t42" class="t" style="left:748.10px;top:726.90px;font-size:15px;line-height:15px;color:#fff;font-weight:700;letter-spacing:-0.589px;">offButtonBackground</span>
<svg class="ic" style="left:902.80px;top:723.00px;" width="25" height="25" viewBox="0 0 24 24" fill="#fff"><path d="M3 17.25V21h3.75L17.81 9.94l-3.75-3.75L3 17.25zM20.71 7.04c.39-.39.39-1.02 0-1.41l-2.34-2.34c-.39-.39-1.02-.39-1.41 0l-1.83 1.83 3.75 3.75 1.83-1.83z"/></svg>
<svg class="ic" style="left:937.80px;top:723.00px;" width="25" height="25" viewBox="0 0 24 24" fill="#fff"><path d="M19.14 12.94c.04-.3.06-.61.06-.94 0-.32-.02-.64-.07-.94l2.03-1.58c.18-.14.23-.41.12-.61l-1.92-3.32c-.12-.22-.37-.29-.59-.22l-2.39.96c-.5-.38-1.03-.7-1.62-.94l-.36-2.54c-.04-.24-.24-.41-.48-.41h-3.84c-.24 0-.43.17-.47.41l-.36 2.54c-.59.24-1.13.57-1.62.94l-2.39-.96c-.22-.08-.47 0-.59.22L2.74 8.87c-.12.21-.08.47.12.61l2.03 1.58c-.05.3-.09.63-.09.94s.02.64.07.94l-2.03 1.58c-.18.14-.23.41-.12.61l1.92 3.32c.12.22.37.29.59.22l2.39-.96c.5.38 1.03.7 1.62.94l.36 2.54c.05.24.24.41.48.41h3.84c.24 0 .44-.17.47-.41l.36-2.54c.59-.24 1.13-.56 1.62-.94l2.39.96c.22.08.47 0 .59-.22l1.92-3.32c.12-.22.07-.47-.12-.61l-2.01-1.58zM12 15.6c-1.98 0-3.6-1.62-3.6-3.6s1.62-3.6 3.6-3.6 3.6 1.62 3.6 3.6-1.62 3.6-3.6 3.6z"/></svg>
<svg class="ic" style="left:972.80px;top:723.00px;" width="25" height="25" viewBox="0 0 24 24" fill="#fff"><path d="M6 19c0 1.1.9 2 2 2h8c1.1 0 2-.9 2-2V7H6v12zM19 4h-3.5l-1-1h-5l-1 1H5v2h14V4z"/></svg>
<div class="b" style="left:470px;top:677.8px;width:210.5px;height:37.2px;background:rgba(0,0,0,.52);border-radius:8px;"></div>
<svg class="ic" style="left:565px;top:715.0px" width="22" height="11.5"><path d="M0 0 L22 0 L11 11.3 Z" fill="rgba(0,0,0,.52)"/></svg>
<span id="t43" class="t" style="left:481.60px;top:687.90px;font-size:15px;line-height:15px;color:#fff;letter-spacing:-0.442px;-webkit-text-stroke:0.4px #fff;">g:</span>
<span id="t44" class="t" style="left:503.75px;top:687.90px;font-size:15px;line-height:15px;color:#fff;font-weight:700;letter-spacing:-0.782px;">onButton</span>
<svg class="ic" style="left:574.80px;top:684.00px;" width="25" height="25" viewBox="0 0 24 24" fill="#fff"><path d="M3 17.25V21h3.75L17.81 9.94l-3.75-3.75L3 17.25zM20.71 7.04c.39-.39.39-1.02 0-1.41l-2.34-2.34c-.39-.39-1.02-.39-1.41 0l-1.83 1.83 3.75 3.75 1.83-1.83z"/></svg>
<svg class="ic" style="left:609.80px;top:684.00px;" width="25" height="25" viewBox="0 0 24 24" fill="#fff"><path d="M19.14 12.94c.04-.3.06-.61.06-.94 0-.32-.02-.64-.07-.94l2.03-1.58c.18-.14.23-.41.12-.61l-1.92-3.32c-.12-.22-.37-.29-.59-.22l-2.39.96c-.5-.38-1.03-.7-1.62-.94l-.36-2.54c-.04-.24-.24-.41-.48-.41h-3.84c-.24 0-.43.17-.47.41l-.36 2.54c-.59.24-1.13.57-1.62.94l-2.39-.96c-.22-.08-.47 0-.59.22L2.74 8.87c-.12.21-.08.47.12.61l2.03 1.58c-.05.3-.09.63-.09.94s.02.64.07.94l-2.03 1.58c-.18.14-.23.41-.12.61l1.92 3.32c.12.22.37.29.59.22l2.39-.96c.5.38 1.03.7 1.62.94l.36 2.54c.05.24.24.41.48.41h3.84c.24 0 .44-.17.47-.41l.36-2.54c.59-.24 1.13-.56 1.62-.94l2.39.96c.22.08.47 0 .59-.22l1.92-3.32c.12-.22.07-.47-.12-.61l-2.01-1.58zM12 15.6c-1.98 0-3.6-1.62-3.6-3.6s1.62-3.6 3.6-3.6 3.6 1.62 3.6 3.6-1.62 3.6-3.6 3.6z"/></svg>
<svg class="ic" style="left:644.80px;top:684.00px;" width="25" height="25" viewBox="0 0 24 24" fill="#fff"><path d="M6 19c0 1.1.9 2 2 2h8c1.1 0 2-.9 2-2V7H6v12zM19 4h-3.5l-1-1h-5l-1 1H5v2h14V4z"/></svg>
<div class="b" style="left:745px;top:677.8px;width:213.0px;height:37.2px;background:rgba(0,0,0,.52);border-radius:8px;"></div>
<svg class="ic" style="left:840.7px;top:715.0px" width="22" height="11.5"><path d="M0 0 L22 0 L11 11.3 Z" fill="rgba(0,0,0,.52)"/></svg>
<span id="t45" class="t" style="left:756.60px;top:687.90px;font-size:15px;line-height:15px;color:#fff;letter-spacing:-0.442px;-webkit-text-stroke:0.4px #fff;">g:</span>
<span id="t46" class="t" style="left:778.75px;top:687.90px;font-size:15px;line-height:15px;color:#fff;font-weight:700;letter-spacing:-0.506px;">offButton</span>
<svg class="ic" style="left:852.30px;top:684.00px;" width="25" height="25" viewBox="0 0 24 24" fill="#fff"><path d="M3 17.25V21h3.75L17.81 9.94l-3.75-3.75L3 17.25zM20.71 7.04c.39-.39.39-1.02 0-1.41l-2.34-2.34c-.39-.39-1.02-.39-1.41 0l-1.83 1.83 3.75 3.75 1.83-1.83z"/></svg>
<svg class="ic" style="left:887.30px;top:684.00px;" width="25" height="25" viewBox="0 0 24 24" fill="#fff"><path d="M19.14 12.94c.04-.3.06-.61.06-.94 0-.32-.02-.64-.07-.94l2.03-1.58c.18-.14.23-.41.12-.61l-1.92-3.32c-.12-.22-.37-.29-.59-.22l-2.39.96c-.5-.38-1.03-.7-1.62-.94l-.36-2.54c-.04-.24-.24-.41-.48-.41h-3.84c-.24 0-.43.17-.47.41l-.36 2.54c-.59.24-1.13.57-1.62.94l-2.39-.96c-.22-.08-.47 0-.59.22L2.74 8.87c-.12.21-.08.47.12.61l2.03 1.58c-.05.3-.09.63-.09.94s.02.64.07.94l-2.03 1.58c-.18.14-.23.41-.12.61l1.92 3.32c.12.22.37.29.59.22l2.39-.96c.5.38 1.03.7 1.62.94l.36 2.54c.05.24.24.41.48.41h3.84c.24 0 .44-.17.47-.41l.36-2.54c.59-.24 1.13-.56 1.62-.94l2.39.96c.22.08.47 0 .59-.22l1.92-3.32c.12-.22.07-.47-.12-.61l-2.01-1.58zM12 15.6c-1.98 0-3.6-1.62-3.6-3.6s1.62-3.6 3.6-3.6 3.6 1.62 3.6 3.6-1.62 3.6-3.6 3.6z"/></svg>
<svg class="ic" style="left:922.30px;top:684.00px;" width="25" height="25" viewBox="0 0 24 24" fill="#fff"><path d="M6 19c0 1.1.9 2 2 2h8c1.1 0 2-.9 2-2V7H6v12zM19 4h-3.5l-1-1h-5l-1 1H5v2h14V4z"/></svg>
<div class="b" style="left:449px;top:757.8px;width:257.3px;height:37.2px;background:rgba(0,0,0,.52);border-radius:8px;"></div>
<span id="t47" class="t" style="left:460.20px;top:767.90px;font-size:15px;line-height:15px;color:#fff;letter-spacing:0.206px;-webkit-text-stroke:0.4px #fff;">text:</span>
<span id="t48" class="t" style="left:499.40px;top:767.90px;font-size:15px;line-height:15px;color:#fff;font-weight:700;letter-spacing:-0.525px;">onButtonText</span>
<svg class="ic" style="left:600.60px;top:764.00px;" width="25" height="25" viewBox="0 0 24 24" fill="#fff"><path d="M3 17.25V21h3.75L17.81 9.94l-3.75-3.75L3 17.25zM20.71 7.04c.39-.39.39-1.02 0-1.41l-2.34-2.34c-.39-.39-1.02-.39-1.41 0l-1.83 1.83 3.75 3.75 1.83-1.83z"/></svg>
<svg class="ic" style="left:635.60px;top:764.00px;" width="25" height="25" viewBox="0 0 24 24" fill="#fff"><path d="M19.14 12.94c.04-.3.06-.61.06-.94 0-.32-.02-.64-.07-.94l2.03-1.58c.18-.14.23-.41.12-.61l-1.92-3.32c-.12-.22-.37-.29-.59-.22l-2.39.96c-.5-.38-1.03-.7-1.62-.94l-.36-2.54c-.04-.24-.24-.41-.48-.41h-3.84c-.24 0-.43.17-.47.41l-.36 2.54c-.59.24-1.13.57-1.62.94l-2.39-.96c-.22-.08-.47 0-.59.22L2.74 8.87c-.12.21-.08.47.12.61l2.03 1.58c-.05.3-.09.63-.09.94s.02.64.07.94l-2.03 1.58c-.18.14-.23.41-.12.61l1.92 3.32c.12.22.37.29.59.22l2.39-.96c.5.38 1.03.7 1.62.94l.36 2.54c.05.24.24.41.48.41h3.84c.24 0 .44-.17.47-.41l.36-2.54c.59-.24 1.13-.56 1.62-.94l2.39.96c.22.08.47 0 .59-.22l1.92-3.32c.12-.22.07-.47-.12-.61l-2.01-1.58zM12 15.6c-1.98 0-3.6-1.62-3.6-3.6s1.62-3.6 3.6-3.6 3.6 1.62 3.6 3.6-1.62 3.6-3.6 3.6z"/></svg>
<svg class="ic" style="left:670.60px;top:764.00px;" width="25" height="25" viewBox="0 0 24 24" fill="#fff"><path d="M6 19c0 1.1.9 2 2 2h8c1.1 0 2-.9 2-2V7H6v12zM19 4h-3.5l-1-1h-5l-1 1H5v2h14V4z"/></svg>
<div class="b" style="left:722px;top:757.8px;width:259.6px;height:37.2px;background:rgba(0,0,0,.52);border-radius:8px;"></div>
<span id="t49" class="t" style="left:733.50px;top:767.90px;font-size:15px;line-height:15px;color:#fff;letter-spacing:0.206px;-webkit-text-stroke:0.4px #fff;">text:</span>
<span id="t50" class="t" style="left:772.80px;top:767.90px;font-size:15px;line-height:15px;color:#fff;font-weight:700;letter-spacing:-0.333px;">offButtonText</span>
<svg class="ic" style="left:875.90px;top:764.00px;" width="25" height="25" viewBox="0 0 24 24" fill="#fff"><path d="M3 17.25V21h3.75L17.81 9.94l-3.75-3.75L3 17.25zM20.71 7.04c.39-.39.39-1.02 0-1.41l-2.34-2.34c-.39-.39-1.02-.39-1.41 0l-1.83 1.83 3.75 3.75 1.83-1.83z"/></svg>
<svg class="ic" style="left:910.90px;top:764.00px;" width="25" height="25" viewBox="0 0 24 24" fill="#fff"><path d="M19.14 12.94c.04-.3.06-.61.06-.94 0-.32-.02-.64-.07-.94l2.03-1.58c.18-.14.23-.41.12-.61l-1.92-3.32c-.12-.22-.37-.29-.59-.22l-2.39.96c-.5-.38-1.03-.7-1.62-.94l-.36-2.54c-.04-.24-.24-.41-.48-.41h-3.84c-.24 0-.43.17-.47.41l-.36 2.54c-.59.24-1.13.57-1.62.94l-2.39-.96c-.22-.08-.47 0-.59.22L2.74 8.87c-.12.21-.08.47.12.61l2.03 1.58c-.05.3-.09.63-.09.94s.02.64.07.94l-2.03 1.58c-.18.14-.23.41-.12.61l1.92 3.32c.12.22.37.29.59.22l2.39-.96c.5.38 1.03.7 1.62.94l.36 2.54c.05.24.24.41.48.41h3.84c.24 0 .44-.17.47-.41l.36-2.54c.59-.24 1.13-.56 1.62-.94l2.39.96c.22.08.47 0 .59-.22l1.92-3.32c.12-.22.07-.47-.12-.61l-2.01-1.58zM12 15.6c-1.98 0-3.6-1.62-3.6-3.6s1.62-3.6 3.6-3.6 3.6 1.62 3.6 3.6-1.62 3.6-3.6 3.6z"/></svg>
<svg class="ic" style="left:945.90px;top:764.00px;" width="25" height="25" viewBox="0 0 24 24" fill="#fff"><path d="M6 19c0 1.1.9 2 2 2h8c1.1 0 2-.9 2-2V7H6v12zM19 4h-3.5l-1-1h-5l-1 1H5v2h14V4z"/></svg>
<!-- right panel -->
<div class="b" style="left:1683px;top:108px;width:24px;height:24px;background:#efe6dc;border-radius:50%;"></div>
<div class="b" style="left:1655px;top:190px;width:110px;height:45px;border:1px solid #dcdcdc;border-radius:6px;background:#fff;"></div>
<span id="t51" class="t" style="left:1680.75px;top:202.89px;font-size:17.5px;line-height:17.5px;color:#00695c;letter-spacing:0.895px;-webkit-text-stroke:0.5px #00695c;">Decline</span>
<div class="b" style="left:1780px;top:190px;width:110px;height:45px;background:#00695c;border-radius:6px;"></div>
<svg class="ic" style="left:1794.45px;top:200.75px;" width="22.5" height="22.5" viewBox="0 0 24 24" fill="#fff"><path d="M9 16.17L4.83 12l-1.42 1.41L9 19 21 7l-1.41-1.41z"/></svg>
<span id="t52" class="t" style="left:1823.45px;top:202.89px;font-size:17.5px;line-height:17.5px;color:#fff;letter-spacing:0.469px;-webkit-text-stroke:0.5px #fff;">Apply</span>
<div class="b" style="left:1137px;top:270px;width:748px;height:247px;background:#fff;border-radius:6px;box-shadow:0 0 24px 6px rgba(0,0,0,.045),0 2px 6px rgba(0,0,0,.04);"></div>
<div class="b" style="left:1158px;top:290.5px;width:706.5px;height:140px;border:1px solid #e0e0e0;border-radius:7px;"></div>
<div class="b" style="left:1400px;top:347.3px;width:468px;height:87.2px;border:3px solid #ffc63a;border-radius:10px;box-shadow:inset 0 0 4px 1px rgba(255,190,110,.55),0 0 4px 1px rgba(255,190,110,.55);background:#fff;"></div>
<svg class="ic" style="left:1724.30px;top:376.00px;" width="30" height="30" viewBox="0 0 24 24" fill="#969696"><path d="M19.14 12.94c.04-.3.06-.61.06-.94 0-.32-.02-.64-.07-.94l2.03-1.58c.18-.14.23-.41.12-.61l-1.92-3.32c-.12-.22-.37-.29-.59-.22l-2.39.96c-.5-.38-1.03-.7-1.62-.94l-.36-2.54c-.04-.24-.24-.41-.48-.41h-3.84c-.24 0-.43.17-.47.41l-.36 2.54c-.59.24-1.13.57-1.62.94l-2.39-.96c-.22-.08-.47 0-.59.22L2.74 8.87c-.12.21-.08.47.12.61l2.03 1.58c-.05.3-.09.63-.09.94s.02.64.07.94l-2.03 1.58c-.18.14-.23.41-.12.61l1.92 3.32c.12.22.37.29.59.22l2.39-.96c.5.38 1.03.7 1.62.94l.36 2.54c.05.24.24.41.48.41h3.84c.24 0 .44-.17.47-.41l.36-2.54c.59-.24 1.13-.56 1.62-.94l2.39.96c.22.08.47 0 .59-.22l1.92-3.32c.12-.22.07-.47-.12-.61l-2.01-1.58zM12 15.6c-1.98 0-3.6-1.62-3.6-3.6s1.62-3.6 3.6-3.6 3.6 1.62 3.6 3.6-1.62 3.6-3.6 3.6z"/></svg>
<svg class="ic" style="left:1774.30px;top:376.00px;" width="30" height="30" viewBox="0 0 24 24" fill="#969696"><path d="M6 19c0 1.1.9 2 2 2h8c1.1 0 2-.9 2-2V7H6v12zM19 4h-3.5l-1-1h-5l-1 1H5v2h14V4z"/></svg>
<svg class="ic" style="left:1705px;top:518px" width="40" height="172" viewBox="1705 518 40 172"><path d="M1717.5 522.4 H1730.5 V651.5 H1737.6 L1724 684.5 L1711.3 651.5 H1717.5 Z" fill="#ffc63a" stroke="#3a3a3a" stroke-width="1" stroke-linejoin="miter"/></svg>
<!-- add property popover -->
<div class="b" style="left:983px;top:0px;width:721px;height:785px;background:#fff;border:3px solid #ffc63a;border-radius:9px;box-shadow:inset 0 0 4px 1px rgba(255,190,110,.55),0 0 4px 1px rgba(255,190,110,.55),0 8px 14px 1px rgba(0,0,0,.22);"></div>
<svg class="ic" style="left:1699px;top:376px" width="14" height="30" viewBox="0 0 14 30"><path d="M2 3 L11 14.5 L2 26" fill="#fff" stroke="#ffc63a" stroke-width="2.5" stroke-linejoin="round"/><rect x="0" y="0" width="2.4" height="30" fill="#fff"/></svg>
<span id="t53" class="t" style="left:1007.30px;top:20.07px;font-size:20px;line-height:20px;color:#1f1f1f;letter-spacing:0.353px;-webkit-text-stroke:0.6px #1f1f1f;">Add property</span>
<svg class="ic" style="left:1665px;top:20px" width="21" height="21" viewBox="-10.5 -10.5 21 21"><path d="M-7.2 -7.4 L7.2 7.4 M7.2 -7.4 L-7.2 7.4" stroke="#8f8f8f" stroke-width="3.5" fill="none"/></svg>
<div class="b" style="left:1687px;top:53px;width:7px;height:402px;background:#d3d3d3;"></div>
<div class="b" style="left:1006px;top:65px;width:668px;height:70px;border:1px solid #e0e0e0;border-radius:8px;background:#fff;"></div>
<div class="b" style="left:1297px;top:75px;width:367px;height:50px;border:1px solid #dcdcdc;border-radius:5px;background:#fff;"></div>
<span id="t54" class="t" style="left:1027.50px;top:90.07px;font-size:20px;line-height:20px;color:#1f1f1f;letter-spacing:0.043px;">Id</span>
<span id="t55" class="t" style="left:1312.50px;top:91.76px;font-size:18px;line-height:18px;color:#1f1f1f;letter-spacing:0.324px;">onBtnLabel</span>
<svg class="ic" style="left:1306px;top:110.9px" width="108" height="6" viewBox="0 0 108 6"><path d="M0.2 2 C0.2 0.9 1.4 0.2 3.5 0.2 C32.4 0 64.8 1.2 108 4.2 C75.6 3.4 37.8 2.6 5 3.6 C2.5 4.1 0.2 3.6 0.2 2 Z" fill="#ffc63a"/></svg>
<div class="b" style="left:1003px;top:62px;width:681px;height:75.6px;border:3px solid #ffc63a;border-radius:10px;box-shadow:inset 0 0 4px 1px rgba(255,190,110,.55),0 0 4px 1px rgba(255,190,110,.55);"></div>
<div class="b" style="left:1006px;top:154.2px;width:668px;height:70px;border:1px solid #e0e0e0;border-radius:8px;background:#fff;"></div>
<div class="b" style="left:1297px;top:164.2px;width:367px;height:50px;border:1px solid #dcdcdc;border-radius:5px;background:#fff;"></div>
<span id="t56" class="t" style="left:1027.50px;top:179.27px;font-size:20px;line-height:20px;color:#1f1f1f;letter-spacing:0.258px;">Name</span>
<span id="t57" class="t" style="left:1312.50px;top:180.96px;font-size:18px;line-height:18px;color:#1f1f1f;letter-spacing:0.369px;">On button</span>
<svg class="ic" style="left:1306px;top:199.79999999999998px" width="101" height="6" viewBox="0 0 101 6"><path d="M0.2 2 C0.2 0.9 1.4 0.2 3.5 0.2 C30.3 0 60.6 1.2 101 4.2 C70.7 3.4 35.3 2.6 5 3.6 C2.5 4.1 0.2 3.6 0.2 2 Z" fill="#ffc63a"/></svg>
<div class="b" style="left:1003px;top:152.2px;width:681px;height:74.6px;border:3px solid #ffc63a;border-radius:10px;box-shadow:inset 0 0 4px 1px rgba(255,190,110,.55),0 0 4px 1px rgba(255,190,110,.55);"></div>
<div class="b" style="left:1006px;top:245px;width:668px;height:70px;border:1px solid #e0e0e0;border-radius:8px;background:#fff;"></div>
<div class="b" style="left:1297px;top:254.3px;width:367px;height:51.3px;border:1px solid #dcdcdc;border-radius:5px;background:#fff;"></div>
<span id="t58" class="t" style="left:1028.50px;top:270.07px;font-size:20px;line-height:20px;color:#1f1f1f;letter-spacing:-0.412px;">Type</span>
<span id="t59" class="t" style="left:1312.50px;top:270.96px;font-size:18px;line-height:18px;color:#1f1f1f;letter-spacing:0.496px;">Text</span>
<svg class="ic" style="left:1306px;top:291.25px" width="59" height="6" viewBox="0 0 59 6"><path d="M0.2 2 C0.2 0.9 1.4 0.2 3.5 0.2 C17.7 0 35.4 1.2 59 4.2 C41.3 3.4 20.6 2.6 5 3.6 C2.5 4.1 0.2 3.6 0.2 2 Z" fill="#ffc63a"/></svg>
<svg class="ic" style="left:1627.75px;top:265.50px;" width="30" height="30" viewBox="0 0 24 24" fill="#757575"><path d="M7 10l5 5 5-5z"/></svg>
<div class="b" style="left:1003px;top:242.1px;width:681px;height:75.8px;border:3px solid #ffc63a;border-radius:10px;box-shadow:inset 0 0 4px 1px rgba(255,190,110,.55),0 0 4px 1px rgba(255,190,110,.55);"></div>
<div class="b" style="left:1006px;top:335px;width:668px;height:70px;border:1px solid #e0e0e0;border-radius:8px;background:#fff;"></div>
<div class="b" style="left:1297px;top:345px;width:367px;height:50px;border:1px solid #dcdcdc;border-radius:5px;background:#fff;"></div>
<span id="t60" class="t" style="left:1027.50px;top:360.07px;font-size:20px;line-height:20px;color:#1f1f1f;letter-spacing:-0.051px;">Default value</span>
<span id="t61" class="t" style="left:1312.50px;top:361.76px;font-size:18px;line-height:18px;color:#1f1f1f;transform-origin:0 0;transform:scaleX(0.9347);">On</span>
<svg class="ic" style="left:1306px;top:379.8px" width="38" height="6" viewBox="0 0 38 6"><path d="M0.2 2 C0.2 0.9 1.4 0.2 3.5 0.2 C11.4 0 22.8 1.2 38 4.2 C26.6 3.4 13.3 2.6 5 3.6 C2.5 4.1 0.2 3.6 0.2 2 Z" fill="#ffc63a"/></svg>
<div class="b" style="left:1003px;top:332.3px;width:681px;height:74.5px;border:3px solid #ffc63a;border-radius:10px;box-shadow:inset 0 0 4px 1px rgba(255,190,110,.55),0 0 4px 1px rgba(255,190,110,.55);"></div>
<div class="b" style="left:1006px;top:425px;width:668px;height:69px;border:1px solid #e0e0e0;border-radius:8px;background:#fff;"></div>
<div class="b" style="left:1027px;top:451px;width:45px;height:16.5px;background:#e0e0e0;border-radius:9px;"></div>
<div class="b" style="left:1027px;top:446.5px;width:25px;height:25px;background:#616161;border-radius:50%;box-shadow:0 1px 3px rgba(0,0,0,.22);"></div>
<div class="b" style="left:1032.5px;top:458.5px;width:15.3px;height:2.5px;background:#fff;"></div>
<span id="t62" class="t" style="left:1093.00px;top:449.07px;font-size:20px;line-height:20px;color:#1f1f1f;letter-spacing:0.271px;">Value required</span>
<div class="b" style="left:1000px;top:505px;width:690px;height:209.5px;overflow:hidden;">
<div class="b" style="left:-1000px;top:-505px;width:0;height:0;">
<div class="b" style="left:1006px;top:514.5px;width:668px;height:300px;border:1px solid #e0e0e0;border-radius:8px;background:#fff;"></div>
<span id="t63" class="t" style="left:1028.30px;top:540.07px;font-size:20px;line-height:20px;color:#1f1f1f;letter-spacing:0.285px;-webkit-text-stroke:0.6px #1f1f1f;">Advanced UI settings</span>
<svg class="ic" style="left:1630.75px;top:536.00px;" width="30" height="30" viewBox="0 0 24 24" fill="#757575"><path d="M12 8l-6 6 1.41 1.41L12 10.83l4.59 4.58L18 14z"/></svg>
<div class="b" style="left:1027px;top:585px;width:626px;height:70px;border:1px solid #e0e0e0;border-radius:8px;background:#fff;"></div>
<span id="t64" class="t" style="left:1048.75px;top:610.07px;font-size:20px;line-height:20px;color:#1f1f1f;letter-spacing:0.131px;">Sub label</span>
<div class="b" style="left:1318px;top:595px;width:325px;height:50px;border:1px solid #dcdcdc;border-radius:5px;background:#fff;"></div>
<span id="t65" class="t" style="left:1333.50px;top:611.76px;font-size:18px;line-height:18px;color:#7a7a7a;letter-spacing:-0.508px;">Set</span>
<div class="b" style="left:1027px;top:675px;width:626px;height:70px;border:1px solid #e0e0e0;border-radius:8px;background:#fff;"></div>
<div class="b" style="left:1048px;top:701px;width:44px;height:17px;background:#ff8a65;border-radius:9px;"></div>
<div class="b" style="left:1068px;top:697px;width:25px;height:25px;background:#ff5722;border-radius:50%;"></div>
<svg class="ic" style="left:1071.5px;top:699.5px" width="19.5" height="19.5" viewBox="0 0 24 24" fill="none" stroke="#fff" stroke-width="2.6"><path d="M4 12.5 L9.5 18 L21 6.5"/></svg>
<span id="t66" class="t" style="left:1113.75px;top:698.57px;font-size:20px;line-height:20px;color:#1f1f1f;letter-spacing:0.430px;">Vertical divider after</span>
</div></div>
<span id="t67" class="t" style="left:1513.50px;top:736.19px;font-size:17.5px;line-height:17.5px;color:#00695c;letter-spacing:0.383px;-webkit-text-stroke:0.5px #00695c;">Cancel</span>
<div class="b" style="left:1601px;top:722px;width:80px;height:45px;background:#00695c;border-radius:5px;box-shadow:0 2px 3px rgba(0,0,0,.3);"></div>
<span id="t68" class="t" style="left:1625.75px;top:736.19px;font-size:17.5px;line-height:17.5px;color:#fff;letter-spacing:0.297px;-webkit-text-stroke:0.5px #fff;">Add</span>
<!-- annotations -->
<div class="b" style="left:641.3px;top:73.1px;width:312.4px;height:41.7px;background:#fff0df;border:3px solid #ffc63a;border-radius:10px;box-shadow:0 0 4px 1px rgba(255,190,110,.6);"></div>
<span id="t69" class="t" style="left:648.80px;top:80.65px;font-size:27.7px;line-height:27.7px;color:#000;letter-spacing:0.166px;">Property Id: onBtnLabel</span>
<div class="b" style="left:661.6px;top:41.5px;width:29.2px;height:35.4px;background:#fff;border:3px solid #ffc63a;border-radius:10px;box-shadow:0 0 4px 1px rgba(255,190,110,.6);"></div>
<span id="t70" class="t" style="left:676.20px;top:45.95px;font-size:27.7px;line-height:27.7px;color:#000;transform:translateX(-50%);">1</span>
<svg class="ic" style="left:950px;top:86.5px" width="64" height="14" viewBox="950 86.5 64 14"><g stroke="#ffc63a" stroke-width="3" fill="none"><path d="M953 93.5 H960 M965 93.5 H984 M991 93.5 H1004"/></g><circle cx="1004.85" cy="93.7" r="5.1" fill="#ffc63a"/></svg>
<div class="b" style="left:615.3px;top:167.2px;width:338.4px;height:41.7px;background:#fff0df;border:3px solid #ffc63a;border-radius:10px;box-shadow:0 0 4px 1px rgba(255,190,110,.6);"></div>
<span id="t71" class="t" style="left:622.00px;top:174.65px;font-size:27.7px;line-height:27.7px;color:#000;letter-spacing:0.188px;">Property name: On button</span>
<div class="b" style="left:635.6px;top:135.6px;width:29.2px;height:35.4px;background:#fff;border:3px solid #ffc63a;border-radius:10px;box-shadow:0 0 4px 1px rgba(255,190,110,.6);"></div>
<span id="t72" class="t" style="left:650.20px;top:140.05px;font-size:27.7px;line-height:27.7px;color:#000;transform:translateX(-50%);">2</span>
<svg class="ic" style="left:950px;top:181.8px" width="64" height="14" viewBox="950 181.8 64 14"><g stroke="#ffc63a" stroke-width="3" fill="none"><path d="M953 188.8 H960 M965 188.8 H984 M991 188.8 H1004"/></g><circle cx="1004.85" cy="189.0" r="5.1" fill="#ffc63a"/></svg>
<div class="b" style="left:704px;top:251.3px;width:249.9px;height:41.7px;background:#fff0df;border:3px solid #ffc63a;border-radius:10px;box-shadow:0 0 4px 1px rgba(255,190,110,.6);"></div>
<span id="t73" class="t" style="left:711.20px;top:258.85px;font-size:27.7px;line-height:27.7px;color:#000;letter-spacing:0.139px;">Properly type: Text</span>
<div class="b" style="left:724.3px;top:219.7px;width:29.2px;height:35.4px;background:#fff;border:3px solid #ffc63a;border-radius:10px;box-shadow:0 0 4px 1px rgba(255,190,110,.6);"></div>
<span id="t74" class="t" style="left:738.90px;top:224.15px;font-size:27.7px;line-height:27.7px;color:#000;transform:translateX(-50%);">3</span>
<svg class="ic" style="left:950px;top:266.2px" width="64" height="14" viewBox="950 266.2 64 14"><g stroke="#ffc63a" stroke-width="3" fill="none"><path d="M953 273.2 H960 M965 273.2 H984 M991 273.2 H1004"/></g><circle cx="1004.85" cy="273.4" r="5.1" fill="#ffc63a"/></svg>
<div class="b" style="left:721.3px;top:347.1px;width:232.6px;height:41.7px;background:#fff0df;border:3px solid #ffc63a;border-radius:10px;box-shadow:0 0 4px 1px rgba(255,190,110,.6);"></div>
<span id="t75" class="t" style="left:728.50px;top:354.55px;font-size:27.7px;line-height:27.7px;color:#000;letter-spacing:0.179px;">Default value: On</span>
<div class="b" style="left:741.6px;top:315.5px;width:29.2px;height:35.4px;background:#fff;border:3px solid #ffc63a;border-radius:10px;box-shadow:0 0 4px 1px rgba(255,190,110,.6);"></div>
<span id="t76" class="t" style="left:756.20px;top:319.95px;font-size:27.7px;line-height:27.7px;color:#000;transform:translateX(-50%);">4</span>
<svg class="ic" style="left:950px;top:362.3px" width="64" height="14" viewBox="950 362.3 64 14"><g stroke="#ffc63a" stroke-width="3" fill="none"><path d="M953 369.3 H960 M965 369.3 H984 M991 369.3 H1004"/></g><circle cx="1004.85" cy="369.5" r="5.1" fill="#ffc63a"/></svg>
<div class="b" style="left:1744.5px;top:562.5px;width:160.0px;height:41.7px;background:#fff0df;border:3px solid #ffc63a;border-radius:10px;box-shadow:0 0 4px 1px rgba(255,190,110,.6);"></div>
<span id="t77" class="t" style="left:1752.00px;top:569.25px;font-size:27.7px;line-height:27.7px;color:#000;letter-spacing:0.178px;">Scroll down</span>
<div class="b" style="left:1764.8px;top:530.9px;width:29.2px;height:35.4px;background:#fff;border:3px solid #ffc63a;border-radius:10px;box-shadow:0 0 4px 1px rgba(255,190,110,.6);"></div>
<span id="t78" class="t" style="left:1779.40px;top:535.35px;font-size:27.7px;line-height:27.7px;color:#000;transform:translateX(-50%);">5</span>
</div>
</body></html>
